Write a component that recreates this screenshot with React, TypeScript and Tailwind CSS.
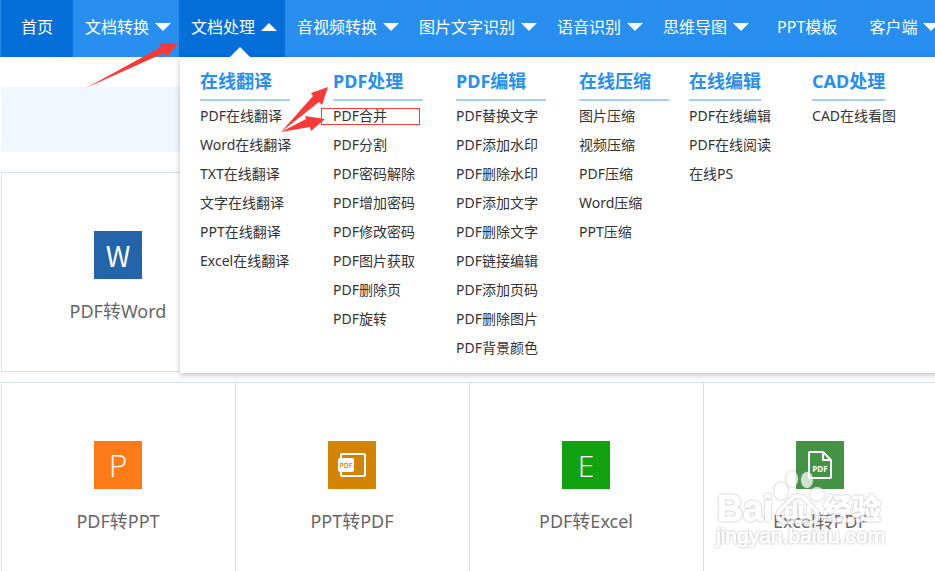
import React from 'react'

type NavItem = {
  label: string;
  arrow?: boolean;
  active?: boolean;
}

type MenuColumn = {
  title: string;
  width: string;
  titleWidth: string;
  links: string[];
}

type Tool = {
  name: string;
  color: string;
  icon: React.ReactNode;
}

const navBefore: NavItem[] = [
  { label: '首页', active: true },
  { label: '文档转换', arrow: true },
]

const navAfter: NavItem[] = [
  { label: '音视频转换', arrow: true },
  { label: '图片文字识别', arrow: true },
  { label: '语音识别', arrow: true },
  { label: '思维导图', arrow: true },
  { label: 'PPT模板' },
  { label: '客户端', arrow: true },
]

const columns: MenuColumn[] = [
  {
    title: '在线翻译',
    width: 'w-[133px]',
    titleWidth: 'min-w-[90px]',
    links: ['PDF在线翻译', 'Word在线翻译', 'TXT在线翻译', '文字在线翻译', 'PPT在线翻译', 'Excel在线翻译'],
  },
  {
    title: 'PDF处理',
    width: 'w-[123px]',
    titleWidth: 'min-w-[90px]',
    links: ['PDF合并', 'PDF分割', 'PDF密码解除', 'PDF增加密码', 'PDF修改密码', 'PDF图片获取', 'PDF删除页', 'PDF旋转'],
  },
  {
    title: 'PDF编辑',
    width: 'w-[123px]',
    titleWidth: 'min-w-[90px]',
    links: ['PDF替换文字', 'PDF添加水印', 'PDF删除水印', 'PDF添加文字', 'PDF删除文字', 'PDF链接编辑', 'PDF添加页码', 'PDF删除图片', 'PDF背景颜色'],
  },
  {
    title: '在线压缩',
    width: 'w-[110px]',
    titleWidth: 'min-w-[90px]',
    links: ['图片压缩', '视频压缩', 'PDF压缩', 'Word压缩', 'PPT压缩'],
  },
  {
    title: '在线编辑',
    width: 'w-[123px]',
    titleWidth: 'min-w-0',
    links: ['PDF在线编辑', 'PDF在线阅读', '在线PS'],
  },
  {
    title: 'CAD处理',
    width: 'w-[123px]',
    titleWidth: 'min-w-0',
    links: ['CAD在线看图'],
  },
]

const PdfSlideIcon = () => (
  <svg viewBox="0 0 48 48" className="size-12" fill="none">
    <rect x="13" y="13" width="24" height="22" rx="1" stroke="#fff" strokeWidth="2" />
    <rect x="10" y="17" width="16" height="14" rx="2" fill="#fff" />
    <text x="18" y="27" textAnchor="middle" fontSize="7" fontWeight="600" fill="#d48404">PDF</text>
  </svg>
)

const PdfPageIcon = () => (
  <svg viewBox="0 0 48 48" className="size-12" fill="none">
    <path d="M14 11h13l8 8v17a1 1 0 0 1-1 1H14a1 1 0 0 1-1-1V12a1 1 0 0 1 1-1z" stroke="#fff" strokeWidth="2" />
    <path d="M27 11v8h8" stroke="#fff" strokeWidth="2" />
    <text x="24" y="31" textAnchor="middle" fontSize="8" fontWeight="700" fill="#fff">PDF</text>
  </svg>
)

const convertTools: Tool[] = [
  { name: 'PDF转PPT', color: 'bg-[#ff7b19]', icon: <span className="text-[32px]">P</span> },
  { name: 'PPT转PDF', color: 'bg-[#d48404]', icon: <PdfSlideIcon /> },
  { name: 'PDF转Excel', color: 'bg-[#12a10f]', icon: <span className="text-[30px]">E</span> },
  { name: 'Excel转PDF', color: 'bg-[#449244]', icon: <PdfPageIcon /> },
]

const Caret = ({ up = false }: { up?: boolean }) => (
  <svg viewBox="0 0 16 8" className="h-2 w-4 shrink-0" fill="#fff">
    <path d={up ? 'M0 8L8 0l8 8z' : 'M0 0h16L8 8z'} />
  </svg>
)

const NavLink = ({ item }: { item: NavItem }) => (
  <a
    href="#"
    className={`flex h-full items-center gap-1.5 whitespace-nowrap pb-1 text-base text-white ${item.arrow ? 'pl-3 pr-2' : 'px-5'} ${item.active ? 'bg-[#046fd8]' : ''}`}
  >
    {item.label}
    {item.arrow && <Caret up={item.active} />}
  </a>
)

const MegaMenu = () => (
  <div className="absolute left-px top-full flex h-[316px] w-screen bg-white pl-5 pt-[11px] shadow-[0_2px_6px_rgba(0,0,0,0.25)]">
    {columns.map((column) => (
      <div key={column.title} className={`shrink-0 ${column.width}`}>
        <h3 className={`inline-block border-b-2 border-[#a6cdf9] pb-[5px] text-lg leading-[26px] font-bold whitespace-nowrap text-[#288ff0] ${column.titleWidth}`}>
          {column.title}
        </h3>
        <ul>
          {column.links.map((link) => (
            <li key={link} className="h-[29px] text-sm leading-[29px] whitespace-nowrap text-[#333]">
              <a href="#">{link}</a>
            </li>
          ))}
        </ul>
      </div>
    ))}
  </div>
)

const ToolCard = ({ tool }: { tool: Tool }) => (
  <a
    href="#"
    className="-mr-px flex h-[200px] w-[235px] shrink-0 flex-col items-center border border-[#d5e2e5] pr-px pt-[58px]"
  >
    <span className={`flex size-12 items-center justify-center font-['Open_Sans'] font-light text-white ${tool.color}`}>
      {tool.icon}
    </span>
    <span className="mt-[18px] text-lg text-[#666]">{tool.name}</span>
  </a>
)

const Watermark = () => (
  <svg
    viewBox="0 0 180 116"
    className="pointer-events-none absolute left-[712px] top-[436px] h-[116px] w-[180px] opacity-75 drop-shadow-[0_0_1px_#999]"
    fill="#fff"
  >
    <ellipse cx="80" cy="43" rx="6" ry="8" />
    <ellipse cx="95" cy="44" rx="6" ry="8" />
    <ellipse cx="69" cy="55" rx="7" ry="9" />
    <ellipse cx="105" cy="58" rx="7" ry="7" />
    <path
      d="M86 58c8 0 12 8 18 14 7 6 5 15-4 16-6 1-10-1-14-1s-8 2-14 1c-9-1-11-10-4-16 6-5 10-14 18-14zM86 62c-6 0-9 7-15 12-5 4-4 10 2 11 5 0 8-1 13-1s8 1 13 1c6-1 7-7 2-11-6-5-9-12-15-12z"
      fillRule="evenodd"
    />
    <g fontWeight="700" stroke="#fff" strokeWidth="1" className="font-['Liberation_Sans','Noto_Sans_CJK_SC',sans-serif]">
      <text x="5" y="85" fontSize="36">Bai</text>
      <text x="72" y="83" fontSize="23">du</text>
      <text x="111" y="84" fontSize="29">经验</text>
    </g>
    <text x="4" y="107" fontSize="21" stroke="#fff" strokeWidth="1" className="font-['Liberation_Sans']">jingyan.baidu.com</text>
  </svg>
)

export default function App() {
  return (
    <div className="relative min-h-screen overflow-hidden bg-white font-['Noto_Sans','Noto_Sans_CJK_SC',sans-serif]">
      <nav className="relative z-10 flex h-[57px] bg-[#288ff0] pl-px">
        {navBefore.map((item) => <NavLink key={item.label} item={item} />)}
        <div className="relative h-full">
          <NavLink item={{ label: '文档处理', arrow: true, active: true }} />
          <MegaMenu />
          <svg viewBox="0 0 20 10" className="absolute bottom-0 left-[51px] h-2.5 w-5" fill="#fff">
            <path d="M0 10L10 0l10 10z" />
          </svg>
        </div>
        {navAfter.map((item) => <NavLink key={item.label} item={item} />)}
      </nav>

      <main className="pl-px">
        <div className="mt-[30px] h-[65px] bg-[#eff8ff]" />
        <div className="mt-5 flex">
          <ToolCard tool={{ name: 'PDF转Word', color: 'bg-[#2464ab]', icon: <span className="text-[28px] font-normal font-['Noto_Sans_CJK_SC']">W</span> }} />
        </div>
        <div className="mt-2.5 flex">
          {convertTools.map((tool) => <ToolCard key={tool.name} tool={tool} />)}
        </div>
      </main>

      <Watermark />

      {/* red hints: which menu to open, which entry to click */}
      <div className="absolute left-[321px] top-[108px] z-20 h-[17px] w-[99px] border border-[#fb3a38]" />
      <svg viewBox="0 0 340 140" className="pointer-events-none absolute left-0 top-0 z-20 h-[140px] w-[340px]" fill="#fb3a38">
        <path d="M86 88L161 47l-2-4h19l-11 14-3-4z" />
        <path d="M281 132L313 96l-2-3 17-6-6 18-3-3z" />
        <path d="M281 132L306 119l-1-3 20 3-14 12-1-4z" />
      </svg>
    </div>
  )
}
